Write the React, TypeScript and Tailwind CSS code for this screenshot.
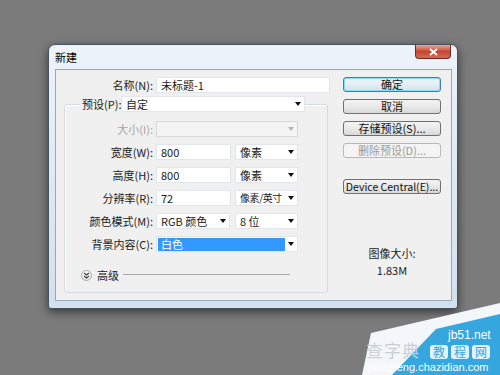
import React from "react";

const FONT = "font-['Noto_Sans_CJK_SC','Microsoft_YaHei',sans-serif]";

function Arrow({ disabled }: { disabled?: boolean }) {
  return (
    <span
      className={`h-0 w-0 border-x-[3px] border-x-transparent border-t-[4px] ${
        disabled ? "border-t-[#b4b4b4]" : "border-t-[#111]"
      }`}
    />
  );
}

function Select({
  value,
  className,
  textClass = "",
  disabled,
  selected,
}: {
  value: string;
  className: string;
  textClass?: string;
  disabled?: boolean;
  selected?: boolean;
}) {
  return (
    <div
      className={`flex h-[16px] items-center border ${
        disabled ? "border-[#d9d9d9] bg-[#f4f4f4]" : "border-[#e2e5ea] bg-white"
      } ${className}`}
    >
      {selected ? (
        <span className="ml-px flex h-[13px] flex-1 items-center bg-[#3399ff] pl-[3px] text-white">
          {value}
        </span>
      ) : (
        <span className={`flex-1 whitespace-nowrap pl-[4px] ${textClass}`}>
          {value}
        </span>
      )}
      <span className="flex w-[12px] shrink-0 justify-center">
        <Arrow disabled={disabled} />
      </span>
    </div>
  );
}

function Field({ value, className }: { value: string; className: string }) {
  return (
    <div
      className={`flex h-[16px] items-center border border-[#e2e5ea] bg-white pl-[4px] ${className}`}
    >
      {value}
    </div>
  );
}

function Row({
  label,
  disabled,
  children,
}: {
  label: string;
  disabled?: boolean;
  children: React.ReactNode;
}) {
  return (
    <div className="flex h-[16px] items-center">
      <span
        className={`w-[88px] whitespace-nowrap text-right ${
          disabled ? "text-[#a6a6a6]" : ""
        }`}
      >
        {label}
      </span>
      <div className="ml-[3px] flex items-center gap-[4px]">{children}</div>
    </div>
  );
}

function Button({
  label,
  primary,
  disabled,
  className = "",
}: {
  label: string;
  primary?: boolean;
  disabled?: boolean;
  className?: string;
}) {
  let tone =
    "border-[#707070] bg-gradient-to-b from-[#f4f4f4] via-[#e9e9e9] to-[#d9d9d9] text-[#111]";
  if (primary)
    tone =
      "border-[#3c7fb1] bg-gradient-to-b from-[#eef5fa] via-[#e4eef5] to-[#d3e1ea] text-[#111] shadow-[inset_0_0_0_1px_#7ee0fb]";
  if (disabled) tone = "border-[#b5b9bc] bg-[#f4f4f4] text-[#9a9a9a]";
  return (
    <div
      className={`flex h-[15px] items-center justify-center whitespace-nowrap rounded-[3px] border leading-[13px] ${tone} ${className}`}
    >
      {label}
    </div>
  );
}

export default function App() {
  return (
    <div
      className={`relative h-[375px] w-[500px] overflow-hidden bg-[#7b7b7b] pl-[48px] pt-[44px] text-[11px] leading-[16px] text-[#1a1a1a] ${FONT}`}
    >
      <div className="flex h-[265px] w-[410px] flex-col rounded-t-[7px] rounded-b-[3px] border border-[#46525e] bg-gradient-to-b from-[#edf3f9] via-[#dfe9f4] to-[#d2e0ee] shadow-[0_3px_10px_rgba(0,0,0,0.55)]">
        <div className="flex h-[24px] items-start justify-between pl-[6px] pr-[6px]">
          <span className="pt-[5px] leading-[14px] text-black">新建</span>
          <div className="flex h-[14px] w-[36px] items-center justify-center rounded-b-[4px] border border-t-0 border-[#6b2b22] bg-gradient-to-b from-[#e6a596] via-[#c7432f] to-[#d46b57]">
            <svg width="9" height="8" viewBox="0 0 9 8">
              <path d="M1 1 L8 7 M8 1 L1 7" stroke="#fff" strokeWidth="2" />
            </svg>
          </div>
        </div>

        <div className="mb-[7px] ml-[6px] mr-[5px] flex flex-1 border border-[#97a8ba] bg-[#f0f0f0]">
          <div className="w-[275px] pl-[8px] pt-[7px]">
            <div className="flex h-[16px] items-center">
              <span className="w-[89px] text-right">名称(N):</span>
              <Field value="未标题-1" className="ml-[3px] w-[174px]" />
            </div>

            <div className="mt-[11px] w-[264px] rounded-[3px] border border-[#d3dbe2] pb-[10px] shadow-[inset_1px_1px_0_#fff]">
              <div className="-mt-[9px] flex h-[16px] items-center pl-[15px]">
                <span className="w-[41px] whitespace-nowrap bg-[#f0f0f0] px-[2px]">
                  预设(P):
                </span>
                <Select value="自定" className="w-[184px]" />
              </div>

              <div className="mt-[9px] flex flex-col gap-[7px]">
                <Row label="大小(I):" disabled>
                  <Select value="" disabled className="w-[142px]" />
                </Row>
                <Row label="宽度(W):">
                  <Field value="800" className="w-[75px]" />
                  <Select value="像素" className="w-[63px]" />
                </Row>
                <Row label="高度(H):">
                  <Field value="800" className="w-[75px]" />
                  <Select value="像素" className="w-[63px]" />
                </Row>
                <Row label="分辨率(R):">
                  <Field value="72" className="w-[75px]" />
                  <Select
                    value="像素/英寸"
                    className="w-[63px]"
                    textClass="pl-[3px] text-[10px] tracking-[-0.4px]"
                  />
                </Row>
                <Row label="颜色模式(M):">
                  <Select value="RGB 颜色" className="mr-px w-[74px]" />
                  <Select value="8 位" className="w-[63px]" />
                </Row>
                <Row label="背景内容(C):">
                  <Select value="白色" selected className="w-[142px]" />
                </Row>
              </div>

              <div className="mt-[16px] flex h-[14px] items-center pl-[16px]">
                <span className="flex h-[11px] w-[11px] items-center justify-center rounded-full border border-[#a9a9a9] bg-gradient-to-b from-white to-[#e3e3e3]">
                  <svg width="7" height="7" viewBox="0 0 7 7">
                    <path
                      d="M1 0.8 L3.5 3 L6 0.8 M1 3.8 L3.5 6 L6 3.8"
                      stroke="#333"
                      strokeWidth="1.1"
                      fill="none"
                    />
                  </svg>
                </span>
                <span className="ml-[5px]">高级</span>
                <span className="ml-[4px] mr-[37px] h-[2px] flex-1 border-t border-[#a7a7a7] border-b-white" />
              </div>
            </div>
          </div>

          <div className="ml-[12px] flex w-[98px] flex-col pt-[7px]">
            <Button label="确定" primary />
            <Button label="取消" className="mt-[7px]" />
            <Button label="存储预设(S)..." className="mt-[7px]" />
            <Button label="删除预设(D)..." disabled className="mt-[7px]" />
            <Button label="Device Central(E)..." className="mt-[21px] text-[10.5px]" />
            <div className="mt-[52px] text-center leading-[14px]">图像大小:</div>
            <div className="mt-[3px] text-center leading-[14px]">1.83M</div>
          </div>
        </div>
      </div>

      <div className="pointer-events-none absolute inset-0">
        <svg className="absolute inset-0" width="500" height="375" viewBox="0 0 500 375">
          <polygon points="362,375 371,333 500,303 500,375" fill="#f4f7fa" />
          <polygon points="392,375 436,329 500,314 500,375" fill="#36a6de" />
        </svg>
        <div className="absolute left-[366px] top-[340px] text-[17px] leading-[20px] tracking-[1px] text-[#c9cfd6]">
          查字典
        </div>
        <div className="absolute left-[448px] top-[329px] font-['Liberation_Sans',sans-serif] text-[12px] leading-[13px] text-white">
          jb51.net
        </div>
        <div className="absolute left-[430px] top-[345px] flex gap-[3px]">
          <span className="rounded-[3px] bg-white/85 px-[3px] text-[12px] leading-[14px] text-[#36a6de]">教</span>
          <span className="rounded-[3px] bg-white/85 px-[3px] text-[12px] leading-[14px] text-[#36a6de]">程</span>
          <span className="rounded-[3px] bg-white/85 px-[3px] text-[12px] leading-[14px] text-[#36a6de]">网</span>
        </div>
        <div className="absolute left-[368px] top-[361px] whitespace-nowrap font-['Liberation_Sans',sans-serif] text-[11px] leading-[12px] text-white">
          jiaocheng.chazidian.com
        </div>
      </div>
    </div>
  );
}
